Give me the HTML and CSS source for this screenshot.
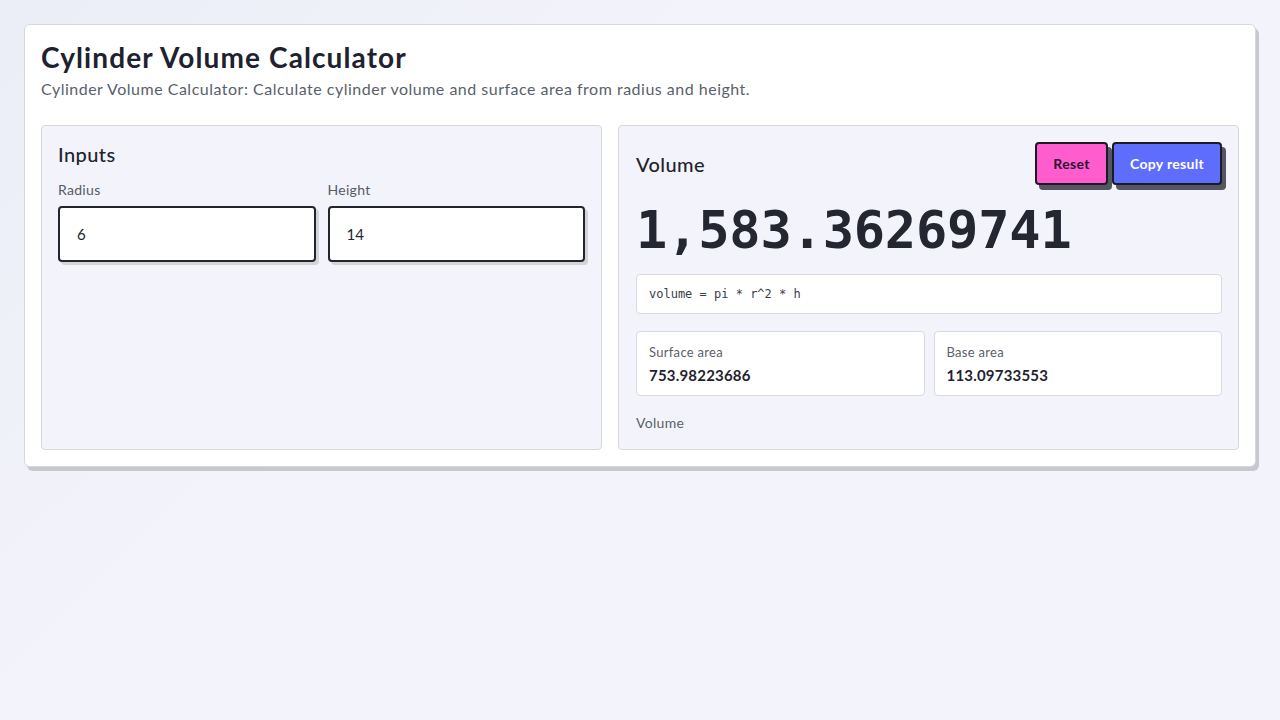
FILE: index.html
```html
<!DOCTYPE html>
<html lang="en">
<head>
<meta charset="utf-8">
<title>Cylinder Volume Calculator</title>
<link rel="stylesheet" href="styles.css">
</head>
<body>
<main class="card">
  <h1 class="title">Cylinder Volume Calculator</h1>
  <p class="subtitle">Cylinder Volume Calculator: Calculate cylinder volume and surface area from radius and height.</p>
  <div class="panels">
    <section class="panel inputs-panel">
      <h2 class="panel-title">Inputs</h2>
      <div class="fields">
        <label class="field">
          <span class="field-label">Radius</span>
          <input class="field-input" type="text" value="6">
        </label>
        <label class="field">
          <span class="field-label">Height</span>
          <input class="field-input" type="text" value="14">
        </label>
      </div>
    </section>
    <section class="panel result-panel">
      <div class="result-head">
        <h2 class="panel-title">Volume</h2>
        <div class="actions">
          <button class="btn btn-reset">Reset</button>
          <button class="btn btn-copy">Copy result</button>
        </div>
      </div>
      <div class="big-value">1,583.36269741</div>
      <div class="formula">volume = pi * r^2 * h</div>
      <div class="stats">
        <div class="stat">
          <div class="stat-label">Surface area</div>
          <div class="stat-value">753.98223686</div>
        </div>
        <div class="stat">
          <div class="stat-label">Base area</div>
          <div class="stat-value">113.09733553</div>
        </div>
      </div>
      <div class="footnote">Volume</div>
    </section>
  </div>
</main>
</body>
</html>
```
FILE: styles.css
```css
* { box-sizing: border-box; }
html, body { margin: 0; }
body {
  min-height: 720px;
  padding: 24px 24px;
  background: linear-gradient(135deg, #eceef7 0%, #f2f3fb 40%, #f3f4fb 100%);
  font-family: "Lato", "Noto Sans", sans-serif;
  color: #1f2330;
}
.card {
  background: #ffffff;
  border: 1px solid #d6d8df;
  border-radius: 6px;
  box-shadow: 3px 4px 0 #c7c8ce;
  padding: 15px 16px 16px 16px;
  width: 1232px;
}
.title {
  margin: 0;
  font-size: 28px;
  line-height: 34px;
  font-weight: 700;
  color: #1d2130;
  letter-spacing: 1.1px;
}
.subtitle {
  margin: 3px 0 0;
  font-size: 16px;
  line-height: 24px;
  color: #5a5f6b;
  letter-spacing: 0.5px;
}
.panels {
  margin-top: 24px;
  display: grid;
  grid-template-columns: minmax(0, 561fr) minmax(0, 621fr);
  gap: 16px;
}
.panel {
  background: #f3f4fb;
  border: 1px solid #d5d7de;
  border-radius: 4px;
  padding: 16px;
  min-height: 325px;
}
.result-panel { padding-left: 17px; }
.panel-title {
  margin: 0;
  font-size: 20px;
  line-height: 24px;
  font-weight: 500;
  color: #1f2330;
  letter-spacing: 0.4px;
}
.fields {
  margin-top: 14px;
  display: grid;
  grid-template-columns: 1fr 1fr;
  gap: 12px;
}
.field { display: flex; flex-direction: column; gap: 6px; }
.field-label {
  font-size: 14px;
  line-height: 20px;
  color: #555a66;
  letter-spacing: 0.3px;
}
.field-input {
  height: 56px;
  width: 100%;
  border: 2px solid #23252d;
  border-radius: 4px;
  background: #fff;
  box-shadow: 3px 3px 0 #d3d4da;
  padding: 0 17px;
  font-family: inherit;
  font-size: 15px;
  color: #23252d;
  outline: none;
}
.result-head {
  display: flex;
  align-items: center;
  justify-content: space-between;
  height: 43px;
}
.actions { display: flex; gap: 4px; }
.btn {
  height: 43px;
  border: 2px solid #1a1b26;
  border-radius: 4px;
  box-shadow: 4px 5px 0 #545762;
  font-family: inherit;
  font-size: 14px;
  font-weight: 700;
  letter-spacing: 0.3px;
  padding: 0;
  cursor: pointer;
}
.btn-reset { background: #ff5ccd; color: #2a1030; width: 73px; }
.btn-copy { background: #5f6dfd; color: #ffffff; width: 110px; }
.big-value {
  margin-top: 14px;
  font-family: "DejaVu Sans Mono", "Liberation Mono", monospace;
  font-weight: 700;
  font-size: 52px;
  line-height: 62px;
  letter-spacing: -0.2px;
  color: #242631;
}
.formula {
  margin-top: 13px;
  height: 40px;
  background: #fff;
  border: 1px solid #d8dae0;
  border-radius: 4px;
  padding: 0 12px;
  display: flex;
  align-items: center;
  font-family: "DejaVu Sans Mono", "Liberation Mono", monospace;
  font-size: 12px;
  color: #3a3d47;
}
.stats {
  margin-top: 17px;
  display: grid;
  grid-template-columns: 1fr 1fr;
  gap: 9px;
}
.stat {
  height: 65px;
  background: #fff;
  border: 1px solid #d8dae0;
  border-radius: 4px;
  padding: 12px 12px;
}
.stat-label {
  font-size: 13px;
  line-height: 16px;
  color: #5b5f6a;
  letter-spacing: 0.3px;
}
.stat-value {
  margin-top: 5px;
  font-size: 15px;
  line-height: 20px;
  font-weight: 700;
  color: #1f2330;
  letter-spacing: 0.2px;
}
.footnote {
  margin-top: 17px;
  font-size: 14px;
  line-height: 20px;
  color: #5b5f6a;
  letter-spacing: 0.3px;
}
```
